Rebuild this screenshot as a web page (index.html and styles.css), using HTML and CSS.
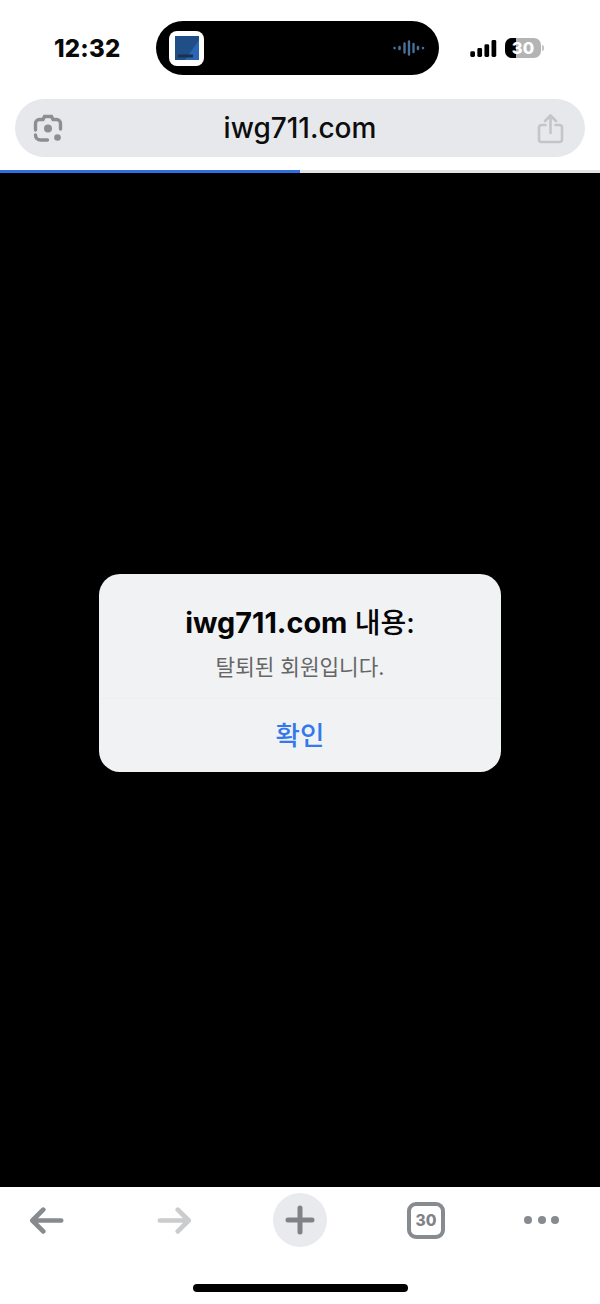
FILE: index.html
```html
<!DOCTYPE html>
<html lang="ko">
<head>
<meta charset="utf-8">
<title>iwg711.com</title>
<link rel="stylesheet" href="styles.css">
</head>
<body>
<div class="phone">
  <header class="top">
    <div class="status">
      <span class="time">12:32</span>
      <div class="island">
        <div class="thumb">
          <svg class="thumb-art" viewBox="0 0 24 24"><rect width="24" height="24" fill="#1f4f86"/><path d="M10 24 24 4v20z" fill="#2a66b4"/><path d="M3 20h15" stroke="#16324f" stroke-width="3"/></svg>
        </div>
        <svg class="wave" viewBox="0 0 32 16"><g stroke="#4a7099" stroke-linecap="round" fill="none"><path d="M1.500 8v.1M6.500 7v2" stroke-width="2.600"/><path d="M11.500 3.500v9M16 1.500v13M20.500 4v8" stroke-width="2.400"/><path d="M25 7v2M30 8v.1" stroke-width="2.600"/></g></svg>
      </div>
      <div class="indicators">
        <svg class="signal" viewBox="0 0 28 18"><rect x="0" y="12" width="5" height="6" rx="1.500"/><rect x="7.500" y="8.500" width="5" height="9.500" rx="1.500"/><rect x="15" y="4.500" width="5" height="13.500" rx="1.500"/><rect x="22.500" y="0" width="5" height="18" rx="1.500"/></svg>
        <div class="battery"><span class="battery-fill"></span><span class="battery-num">30</span></div>
        <span class="battery-cap"></span>
      </div>
    </div>
    <div class="urlbar">
      <svg class="lens" viewBox="0 0 30 30"><g fill="none" stroke="#8b8f93" stroke-width="3.400" stroke-linecap="round"><path d="M2.500 17v-6.500a4 4 0 0 1 4-4h3.500L11.500 3.500h7L20 6.500h3.500a4 4 0 0 1 4 4V16"/><path d="M2.500 22a5 5 0 0 0 5 5h7"/></g><circle cx="15" cy="15.500" r="4" fill="#8b8f93"/><circle cx="24.500" cy="24.500" r="3.300" fill="#8b8f93"/></svg>
      <span class="host">iwg711.com</span>
      <svg class="share" viewBox="0 0 26 30"><g fill="none" stroke="#c3c5c8" stroke-width="2.600" stroke-linecap="round" stroke-linejoin="round"><path d="M8 11H4a2.500 2.500 0 0 0-2.500 2.500v12A2.500 2.500 0 0 0 4 28h18a2.500 2.500 0 0 0 2.500-2.500v-12A2.500 2.500 0 0 0 22 11h-4"/><path d="M13 19V2M7.500 7 13 1.500 18.500 7"/></g></svg>
    </div>
    <div class="progress"><span class="progress-done"></span></div>
  </header>
  <main class="content">
    <div class="dialog">
      <div class="dialog-body">
        <h1 class="dialog-title"><span class="title-latin">iwg711.com</span> 내용:</h1>
        <p class="dialog-msg">탈퇴된 회원입니다.</p>
      </div>
      <div class="dialog-action">확인</div>
    </div>
  </main>
  <footer class="bottom">
    <nav class="toolbar">
      <svg class="tool-arrow back" viewBox="0 0 36 30"><path d="M33 15H3M14 3.500 2.500 15 14 26.500" fill="none" stroke="#878b8f" stroke-width="5" stroke-linecap="round" stroke-linejoin="round"/></svg>
      <svg class="tool-arrow forward" viewBox="0 0 36 30"><path d="M3 15h30M22 3.500 33.500 15 22 26.500" fill="none" stroke="#cbcccd" stroke-width="5" stroke-linecap="round" stroke-linejoin="round"/></svg>
      <div class="plus"><svg class="plus-icon" viewBox="0 0 30 30"><path d="M15 3v24M3 15h24" stroke="#7f8387" stroke-width="5" stroke-linecap="round"/></svg></div>
      <div class="tabs">30</div>
      <div class="more"><span class="dot"></span><span class="dot"></span><span class="dot"></span></div>
    </nav>
    <div class="home"></div>
  </footer>
</div>
</body>
</html>
```

FILE: styles.css
```css
* { box-sizing: border-box; }
html, body { margin: 0; padding: 0; background: #fff; }
.phone {
  width: 600px;
  height: 1304px;
  display: flex;
  flex-direction: column;
  overflow: hidden;
  font-family: Inter, "Noto Sans CJK KR", sans-serif;
}
.top { background: #fff; display: flex; flex-direction: column; }
.status {
  height: 99px;
  padding: 21px 0 24px 54px;
  display: flex;
  align-items: center;
}
.time {
  width: 102px;
  font-size: 24px;
  font-weight: 800;
  color: #0a0a0a;
  letter-spacing: 0.2px;
}
.island {
  width: 283px;
  height: 54px;
  border-radius: 27px;
  background: #000;
  display: flex;
  align-items: center;
  justify-content: space-between;
  padding: 0 14px 0 13px;
}
.thumb {
  width: 35px;
  height: 35px;
  border-radius: 8px;
  background: #fff;
  display: flex;
  align-items: center;
  justify-content: center;
}
.thumb-art { width: 24px; height: 24px; display: block; }
.wave { width: 32px; height: 16px; display: block; }
.indicators {
  margin-left: 31px;
  display: flex;
  align-items: center;
}
.signal { width: 27px; height: 17px; fill: #000; display: block; margin-right: 8px; }
.battery {
  position: relative;
  width: 36px;
  height: 20px;
  border-radius: 7px;
  background: #b4b4b4;
  overflow: hidden;
  display: flex;
  align-items: center;
  justify-content: center;
}
.battery-fill {
  position: absolute;
  left: 0;
  top: 0;
  bottom: 0;
  width: 11px;
  background: #000;
}
.battery-num {
  position: relative;
  font-size: 16.500px;
  font-weight: 800;
  line-height: 1;
  color: #fff;
}
.battery-cap {
  width: 2px;
  height: 6px;
  margin-left: 1px;
  border-radius: 0 2px 2px 0;
  background: #c4c4c4;
}
.urlbar {
  margin: 0 15px;
  height: 58px;
  border-radius: 29px;
  background: #e7e8ec;
  display: flex;
  align-items: center;
  justify-content: space-between;
  padding: 0 21px 0 18px;
}
.lens { width: 30px; height: 30px; display: block; }
.host {
  font-size: 28px;
  font-weight: 500;
  color: #0d0d0d;
  line-height: 1;
  padding-bottom: 1px;
}
.share { width: 27px; height: 30px; display: block; margin-top: 2px; }
.progress {
  margin-top: 13px;
  height: 3px;
  background: #e2e2e2;
  display: flex;
}
.progress-done { width: 300px; background: #2f6fe0; }
.content {
  flex: 1;
  background: #000;
  display: flex;
  align-items: center;
  justify-content: center;
  padding-bottom: 14px;
}
.dialog {
  width: 402px;
  height: 198px;
  border-radius: 21px;
  background: #f1f2f4;
  display: flex;
  flex-direction: column;
}
.dialog-body {
  height: 125px;
  padding-top: 32px;
  text-align: center;
  border-bottom: 1px solid #eeeff1;
}
.dialog-title {
  margin: 0;
  font-size: 28px;
  font-weight: 500;
  line-height: 34px;
  color: #050505;
}
.title-latin { font-weight: 700; font-size: 28.800px; }
.dialog-msg {
  margin: 13px 0 0;
  font-size: 21.300px;
  line-height: 28px;
  color: #666;
}
.dialog-action {
  flex: 1;
  display: flex;
  align-items: center;
  justify-content: center;
  font-size: 26.500px;
  font-weight: 500;
  color: #3478ee;
  padding-bottom: 4px;
}
.bottom {
  height: 117px;
  background: #fff;
  display: flex;
  flex-direction: column;
  align-items: center;
}
.toolbar {
  width: 100%;
  height: 66px;
  padding-left: 30px;
  display: flex;
  align-items: center;
  gap: 80px;
}
.tool-arrow { width: 34px; height: 29px; display: block; }
.back { margin-right: 13px; }
.forward { margin-right: 2px; }
.plus {
  width: 54px;
  height: 54px;
  border-radius: 50%;
  background: #e9eaee;
  display: flex;
  align-items: center;
  justify-content: center;
}
.plus-icon { width: 30px; height: 30px; display: block; }
.tabs {
  width: 38px;
  height: 37px;
  border: 4px solid #878b8f;
  border-radius: 9px;
  display: flex;
  align-items: center;
  justify-content: center;
  font-size: 15.500px;
  font-weight: 800;
  color: #7f8387;
}
.more { display: flex; gap: 5.500px; margin-left: -1px; }
.dot { width: 8px; height: 8px; border-radius: 50%; background: #878b8f; }
.home {
  margin-top: 31px;
  width: 215px;
  height: 8px;
  border-radius: 4px;
  background: #000;
}
```
